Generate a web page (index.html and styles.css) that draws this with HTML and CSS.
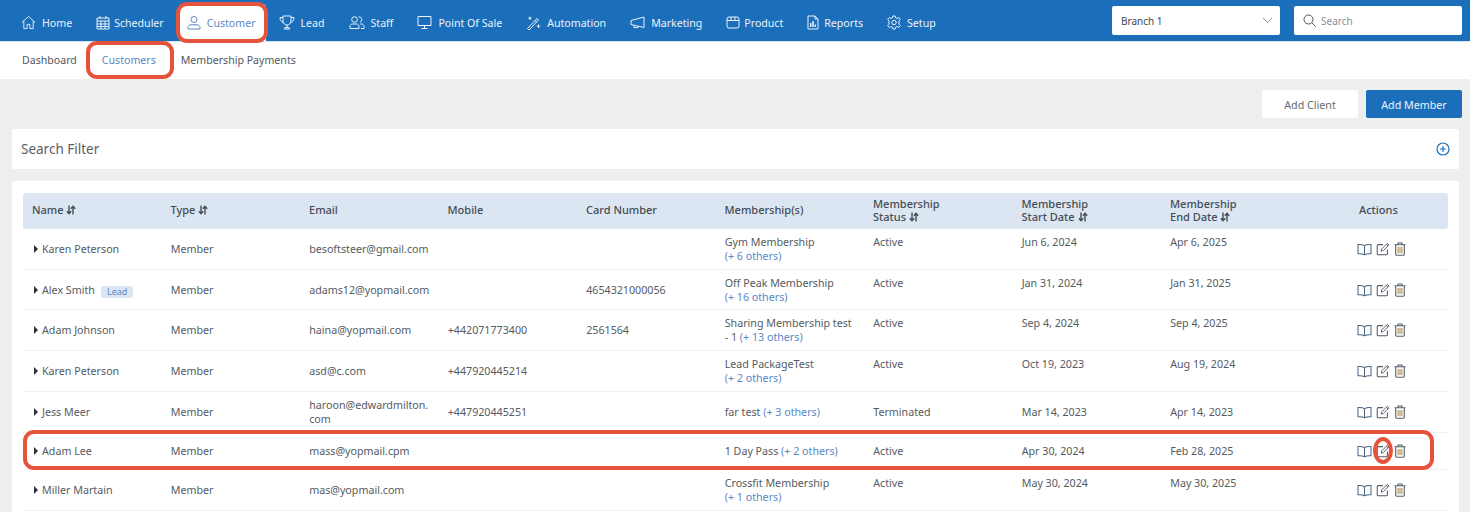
FILE: index.html
```html
<!DOCTYPE html>
<html lang="en">
<head>
<meta charset="utf-8">
<title>Customers</title>
<link rel="stylesheet" href="styles.css">
</head>
<body>
<svg class="defs" width="0" height="0" aria-hidden="true">
  <defs>
    <symbol id="sort" viewBox="0 0 10 10"><path d="M3 .5v8M.8 6.300l2.200 2.400 2.200-2.400M7 9.500V1.500M4.800 3.700l2.200-2.400 2.200 2.400" fill="none" stroke="currentColor" stroke-width="1.400"/></symbol>
    <symbol id="book" viewBox="0 0 16 14"><path d="M8 3C6.500 1.800 4 1.500 1 1.700V11.600C4 11.400 6.500 11.700 8 12.800 9.500 11.700 12 11.400 15 11.600V1.700C12 1.500 9.500 1.800 8 3ZM8 3V12.800" fill="none" stroke="#4c6480" stroke-width="1.100"/></symbol>
    <symbol id="edit" viewBox="0 0 15 15"><path d="M7.500 2.800H2.500A1.200 1.200 0 0 0 1.300 4V12.500A1.200 1.200 0 0 0 2.500 13.700H11A1.200 1.200 0 0 0 12.200 12.500V8" fill="none" stroke="#505a66" stroke-width="1.100"/><path d="M5.500 9.800 6 7.500 12 1.500 13.800 3.200 7.800 9.200ZM11 2.500 12.800 4.200" fill="none" stroke="#505a66" stroke-width="1"/></symbol>
    <symbol id="trash" viewBox="0 0 12 14"><path d="M.5 2.800H11.500M4 2.500V1H8V2.500M1.700 3V12A1.300 1.300 0 0 0 3 13.300H9A1.300 1.300 0 0 0 10.300 12V3" fill="none" stroke="#55606c" stroke-width="1.100"/><path d="M4.100 5V11.300M6 5V11.300M7.900 5V11.300" stroke="#b58a4a" stroke-width="1.100"/></symbol>
  </defs>
</svg>

<header class="topbar">
  <nav class="mainnav">
    <a class="navitem"><svg class="ico" width="15" height="15" viewBox="0 0 16 16"><path d="M1 8 8 1.500 15 8M3 6.500V14.500H6.500V10H9.500V14.500H13V6.500"/></svg>Home</a>
    <a class="navitem gap-small"><svg class="ico" width="14" height="15" viewBox="0 0 14 15"><path d="M1 3H13V14H1ZM1 6H13M4 1V4M10 1V4M1 9H13M1 11.500H13M5 6V14M9 6V14"/></svg>Scheduler</a>
    <a class="navitem active"><svg class="ico" width="14" height="15" viewBox="0 0 14 15"><circle cx="7" cy="4.500" r="3"/><path d="M1 14V12.500C1 10.800 2.500 9.800 4 9.800H10C11.500 9.800 13 10.800 13 12.500V14Z"/></svg>Customer</a>
    <a class="navitem"><svg class="ico" width="16" height="15" viewBox="0 0 16 15"><path d="M4 1H12V6C12 8.500 10 10 8 10S4 8.500 4 6ZM4 2.500H1C1 5 2 7 4.500 7.500M12 2.500H15C15 5 14 7 11.500 7.500M8 10V12.500M5 14H11L10 12.500H6Z"/></svg>Lead</a>
    <a class="navitem"><svg class="ico" width="16" height="15" viewBox="0 0 16 15"><circle cx="5.500" cy="4.500" r="2.800"/><path d="M1 13.500V11.500C1 10 2.200 9 3.500 9H7.500C8.800 9 10 10 10 11.500V13.500ZM9.500 2A2.600 2.600 0 0 1 11 7M11 9H12.500C13.800 9 15 10 15 11.500V13.500H12"/></svg>Staff</a>
    <a class="navitem"><svg class="ico" width="15" height="15" viewBox="0 0 15 15"><path d="M1 1.500H14V10.500H1ZM7.500 10.500V13.500M4.500 13.500H10.500"/></svg>Point Of Sale</a>
    <a class="navitem"><svg class="ico" width="15" height="15" viewBox="0 0 14 15"><path d="M1 13.500 10.500 3.500 12 5 2.500 15ZM8.500 5.500 10 7M3.500 1.500V5M1.800 3.200H5.200M12 9.500V13M10.300 11.200H13.700"/></svg>Automation</a>
    <a class="navitem"><svg class="ico" width="15" height="15" viewBox="0 0 15 15"><path d="M1 5.500 14 2V12.500L1 9.500ZM4 10V12.500H8V11.200"/></svg>Marketing</a>
    <a class="navitem gap-small"><svg class="ico" width="14" height="15" viewBox="0 0 14 15"><path d="M3 2H11A2 2 0 0 1 13 4V11A2 2 0 0 1 11 13H3A2 2 0 0 1 1 11V4A2 2 0 0 1 3 2ZM1 5.500H13M5 2V5.500M9 2V5.500"/></svg>Product</a>
    <a class="navitem gap-mid"><svg class="ico" width="12" height="15" viewBox="0 0 12 15"><path d="M1 1H8L11 4V14H1ZM8 1V4H11"/><path class="solid" d="M3 8H4.500V12H3ZM5.300 6H6.800V12H5.300ZM7.600 9.500H9V12H7.600Z"/></svg>Reports</a>
    <a class="navitem"><svg class="ico" width="14" height="15" viewBox="0 0 14 15"><circle cx="7" cy="7.500" r="2.200"/><path d="M5.800 1H8.200L8.600 2.800 10.200 3.500 11.800 2.500 13.300 4.500 12 5.800V9.200L13.300 10.500 11.800 12.500 10.200 11.500 8.600 12.200 8.200 14H5.800L5.400 12.200 3.800 11.500 2.200 12.500 .7 10.500 2 9.200V5.800L.7 4.500 2.200 2.500 3.800 3.500 5.400 2.800Z"/></svg>Setup</a>
  </nav>
  <div class="topcontrols">
    <div class="control branch">
      <span>Branch 1</span>
      <svg width="11" height="7" viewBox="0 0 11 7"><path d="M1 1 5.500 5.500 10 1" fill="none" stroke="#8a939c" stroke-width="1"/></svg>
    </div>
    <div class="control search">
      <svg width="13" height="13" viewBox="0 0 13 13"><circle cx="5.500" cy="5.500" r="4.500" fill="none" stroke="#4a5560" stroke-width="1"/><path d="M8.800 8.800 12.500 12.500" stroke="#4a5560" stroke-width="1"/></svg>
      <span>Search</span>
    </div>
  </div>
</header>

<nav class="subnav">
  <a class="subitem">Dashboard</a>
  <a class="subitem current">Customers</a>
  <a class="subitem">Membership Payments</a>
</nav>

<main class="content">
  <div class="actionsbar">
    <button class="btn">Add Client</button>
    <button class="btn primary">Add Member</button>
  </div>

  <section class="filtercard">
    <h2>Search Filter</h2>
    <svg width="14" height="14" viewBox="0 0 14 14"><circle cx="7" cy="7" r="6" fill="none" stroke="#1b6fba" stroke-width="1.200"/><path d="M7 4V10M4 7H10" stroke="#1b6fba" stroke-width="1.200"/></svg>
  </section>

  <section class="tablecard">
    <table class="grid">
      <colgroup>
        <col class="c1"><col class="c1"><col class="c1"><col class="c1"><col class="c1"><col class="c2"><col class="c2"><col class="c2"><col class="c3"><col>
      </colgroup>
      <thead>
        <tr>
          <th class="one">Name <svg class="sort"><use href="#sort"/></svg></th>
          <th class="one">Type <svg class="sort"><use href="#sort"/></svg></th>
          <th class="one">Email</th>
          <th class="one">Mobile</th>
          <th class="one">Card Number</th>
          <th class="one">Membership(s)</th>
          <th>Membership<br>Status <svg class="sort"><use href="#sort"/></svg></th>
          <th>Membership<br>Start Date <svg class="sort"><use href="#sort"/></svg></th>
          <th>Membership<br>End Date <svg class="sort"><use href="#sort"/></svg></th>
          <th class="one">Actions</th>
        </tr>
      </thead>
      <tbody>
        <tr>
          <td><span class="caret"></span>Karen Peterson</td><td>Member</td><td>besoftsteer@gmail.com</td><td></td><td></td>
          <td class="t">Gym Membership<br><span class="more">(+ 6 others)</span></td><td class="t">Active</td><td class="t">Jun 6, 2024</td><td class="t">Apr 6, 2025</td>
          <td><div class="acts"><svg class="a-book"><use href="#book"/></svg><svg class="a-edit"><use href="#edit"/></svg><svg class="a-trash"><use href="#trash"/></svg></div></td>
        </tr>
        <tr class="tight">
          <td><span class="caret"></span>Alex Smith<span class="tag">Lead</span></td><td>Member</td><td>adams12@yopmail.com</td><td></td><td>4654321000056</td>
          <td class="t">Off Peak Membership<br><span class="more">(+ 16 others)</span></td><td class="t">Active</td><td class="t">Jan 31, 2024</td><td class="t">Jan 31, 2025</td>
          <td><div class="acts"><svg class="a-book"><use href="#book"/></svg><svg class="a-edit"><use href="#edit"/></svg><svg class="a-trash"><use href="#trash"/></svg></div></td>
        </tr>
        <tr>
          <td><span class="caret"></span>Adam Johnson</td><td>Member</td><td>haina@yopmail.com</td><td>+442071773400</td><td>2561564</td>
          <td class="t">Sharing Membership test<br>- 1 <span class="more">(+ 13 others)</span></td><td class="t">Active</td><td class="t">Sep 4, 2024</td><td class="t">Sep 4, 2025</td>
          <td><div class="acts"><svg class="a-book"><use href="#book"/></svg><svg class="a-edit"><use href="#edit"/></svg><svg class="a-trash"><use href="#trash"/></svg></div></td>
        </tr>
        <tr>
          <td><span class="caret"></span>Karen Peterson</td><td>Member</td><td>asd@c.com</td><td>+447920445214</td><td></td>
          <td class="t">Lead PackageTest<br><span class="more">(+ 2 others)</span></td><td class="t">Active</td><td class="t">Oct 19, 2023</td><td class="t">Aug 19, 2024</td>
          <td><div class="acts"><svg class="a-book"><use href="#book"/></svg><svg class="a-edit"><use href="#edit"/></svg><svg class="a-trash"><use href="#trash"/></svg></div></td>
        </tr>
        <tr>
          <td><span class="caret"></span>Jess Meer</td><td>Member</td><td>haroon@edwardmilton.<br>com</td><td>+447920445251</td><td></td>
          <td>far test <span class="more">(+ 3 others)</span></td><td>Terminated</td><td>Mar 14, 2023</td><td>Apr 14, 2023</td>
          <td><div class="acts"><svg class="a-book"><use href="#book"/></svg><svg class="a-edit"><use href="#edit"/></svg><svg class="a-trash"><use href="#trash"/></svg></div></td>
        </tr>
        <tr class="single">
          <td><span class="caret"></span>Adam Lee</td><td>Member</td><td>mass@yopmail.cpm</td><td></td><td></td>
          <td>1 Day Pass <span class="more">(+ 2 others)</span></td><td>Active</td><td>Apr 30, 2024</td><td>Feb 28, 2025</td>
          <td><div class="acts"><svg class="a-book"><use href="#book"/></svg><svg class="a-edit"><use href="#edit"/></svg><svg class="a-trash"><use href="#trash"/></svg></div></td>
        </tr>
        <tr>
          <td><span class="caret"></span>Miller Martain</td><td>Member</td><td>mas@yopmail.com</td><td></td><td></td>
          <td class="t">Crossfit Membership<br><span class="more">(+ 1 others)</span></td><td class="t">Active</td><td class="t">May 30, 2024</td><td class="t">May 30, 2025</td>
          <td><div class="acts"><svg class="a-book"><use href="#book"/></svg><svg class="a-edit"><use href="#edit"/></svg><svg class="a-trash"><use href="#trash"/></svg></div></td>
        </tr>
      </tbody>
    </table>
  </section>
</main>

<div class="mark mark-nav"></div>
<div class="mark mark-tab"></div>
<div class="mark mark-row"></div>
<div class="mark mark-edit"></div>
</body>
</html>
```

FILE: styles.css
```css
* { box-sizing: border-box; }
html, body { margin: 0; padding: 0; }
body {
  position: relative;
  height: 512px;
  overflow: hidden;
  background: #eeeeee;
  font-family: "Noto Sans", "Open Sans", sans-serif;
  font-size: 10.700px;
  color: #555b63;
}
.defs { position: absolute; }

.topbar {
  display: flex;
  justify-content: space-between;
  align-items: stretch;
  height: 42px;
  background: #1b6fba;
  border-bottom: 1px solid #d5e3f1;
  padding: 0 8px 0 9px;
}
.mainnav { display: flex; align-items: stretch; padding-top: 4px; font-size: 10.600px; }
.navitem {
  display: flex;
  align-items: center;
  gap: 6px;
  padding: 0 12px;
  color: #eaf2fa;
  line-height: 14px;
  white-space: nowrap;
}
.navitem.gap-small { gap: 4px; }
.navitem.gap-mid { gap: 5px; }
.navitem.active {
  background: #fff;
  color: #5b87c5;
  border-radius: 4px 4px 0 0;
  padding: 0 10px 0 7px;
  margin: 0 1px 0 4px;
}
.ico { fill: none; stroke: currentColor; stroke-width: 1; flex: none; }
.ico .solid { fill: currentColor; stroke: none; }
.topcontrols { display: flex; gap: 14px; padding-top: 6px; }
.control {
  display: flex;
  align-items: center;
  width: 168px;
  height: 29px;
  background: #fff;
  border-radius: 2px;
  font-size: 10px;
}
.branch { justify-content: space-between; padding: 0 7px 0 9px; color: #3f4954; }
.search { gap: 5px; padding-left: 9px; color: #8a9097; }

.subnav {
  display: flex;
  align-items: center;
  gap: 25px;
  height: 37px;
  background: #fff;
  padding: 0 0 2px 22px;
  font-size: 10.600px;
}
.subitem { color: #505861; line-height: 14px; }
.subitem.current { color: #5b87c5; }

.content { padding: 11px 8px 0 12px; }
.actionsbar { display: flex; justify-content: flex-end; gap: 8px; height: 28px; }
.btn {
  width: 96px;
  height: 28px;
  padding: 1px 0 0;
  border: 0;
  border-radius: 2px;
  background: #fff;
  color: #666c73;
  font: 10.700px "Noto Sans", "Open Sans", sans-serif;
}
.btn.primary { background: #1b6fba; color: #eaf2fa; }

.filtercard {
  display: flex;
  align-items: center;
  justify-content: space-between;
  width: 1447px;
  height: 40px;
  margin-top: 11px;
  padding: 0 9px;
  background: #fff;
  border-radius: 2px;
}
.filtercard h2 { margin: 0; font-size: 13.500px; font-weight: 400; color: #5a6067; }

.tablecard {
  width: 1447px;
  height: 340px;
  margin-top: 12px;
  padding: 12px 11px 0;
  background: #fff;
  border-radius: 2px;
}
.grid { width: 1425px; table-layout: fixed; border-collapse: separate; border-spacing: 0; }
.c1 { width: 138.500px; }
.c2 { width: 148.500px; }
.c3 { width: 189px; }
.grid th {
  height: 36px;
  padding: 0 9px 2px 9px;
  background: #dbe6f2;
  text-align: left;
  font-size: 11px;
  font-weight: 500;
  line-height: 13px;
  color: #454c55;
}
.grid th.one { padding-bottom: 4px; }
.grid th:first-child { border-radius: 3px 0 0 3px; }
.grid th:last-child { border-radius: 0 3px 3px 0; }
.sort { width: 10px; height: 10px; vertical-align: -1px; color: #454c55; }
.grid td {
  padding: 6px 9px 6px 9.200px;
  height: 41px;
  line-height: 14px;
  vertical-align: middle;
  border-bottom: 1px solid #f0f0f0;
  overflow: visible;
  white-space: nowrap;
}
.grid td.t { vertical-align: top; }
.grid .tight td { height: 40px; padding-bottom: 5px; }
.grid .single td { height: 37px; padding-top: 4px; padding-bottom: 4px; }
.more { color: #5b87c5; }
.caret {
  display: inline-block;
  width: 0;
  height: 0;
  margin-right: 4px;
  vertical-align: 0;
  border-left: 4px solid #2e3338;
  border-top: 4px solid transparent;
  border-bottom: 4px solid transparent;
}
.grid td:first-child { padding-left: 11px; }
.tag {
  display: inline-block;
  margin-left: 6px;
  padding: 0 6px;
  height: 12px;
  line-height: 12px;
  font-size: 9px;
  background: #dbe6f2;
  color: #5b87c5;
  border-radius: 2px;
  vertical-align: -1px;
}
.acts { display: flex; align-items: center; gap: 4px; margin-left: -2.200px; }
.a-book { width: 15px; height: 13px; }
.a-edit { width: 14px; height: 14px; }
.a-trash { width: 12px; height: 14px; }

.mark {
  position: absolute;
  border: 4px solid #e5533d;
  pointer-events: none;
}
.mark-nav { left: 176px; top: 2px; width: 92px; height: 41px; border-radius: 11px; }
.mark-tab { left: 86px; top: 41px; width: 88px; height: 38px; border-radius: 11px; }
.mark-row { left: 23px; top: 430px; width: 1411px; height: 40px; border-radius: 11px; }
.mark-edit { left: 1373px; top: 437px; width: 20px; height: 27px; border-radius: 50%; }
```
